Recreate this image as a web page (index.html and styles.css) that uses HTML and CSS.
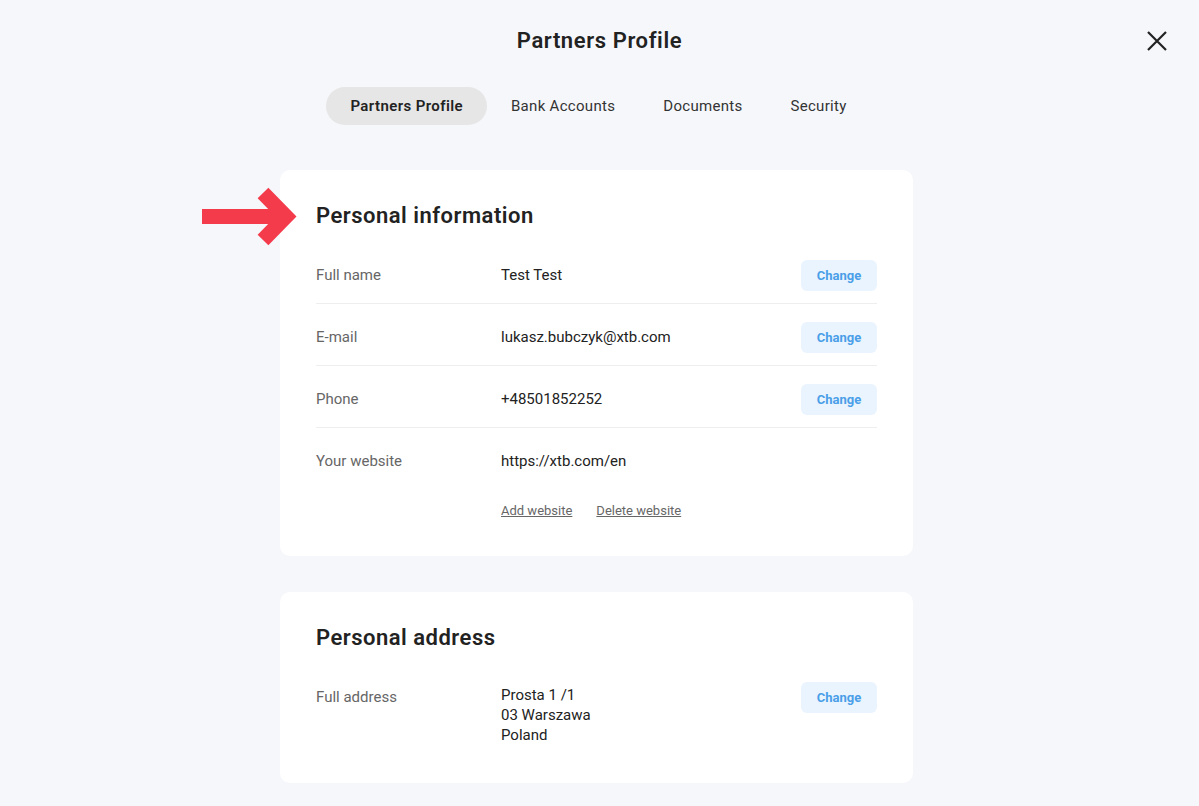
FILE: index.html
```html
<!DOCTYPE html>
<html lang="en">
<head>
<meta charset="utf-8">
<title>Partners Profile</title>
<link rel="stylesheet" href="styles.css">
</head>
<body>
<div class="page">
  <header class="header">
    <h1 class="title">Partners Profile</h1>
    <button class="close" aria-label="Close">
      <svg width="22" height="22" viewBox="0 0 22 22"><path d="M2 2 L20 20 M20 2 L2 20" stroke="#222" stroke-width="2.2" fill="none"/></svg>
    </button>
  </header>
  <nav class="tabs">
    <a class="tab active">Partners Profile</a>
    <a class="tab">Bank Accounts</a>
    <a class="tab">Documents</a>
    <a class="tab">Security</a>
  </nav>
  <main class="content">
    <section class="card card-info">
      <svg class="arrow" width="100" height="64" viewBox="0 0 100 64">
        <path d="M0 30.5 H84" stroke="#f43b4b" stroke-width="15" fill="none"/>
        <path d="M61 7 L84 30.5 L61 54" stroke="#f43b4b" stroke-width="15" fill="none" stroke-linejoin="miter"/>
      </svg>
      <h2 class="card-title">Personal information</h2>
      <div class="row">
        <div class="label">Full name</div>
        <div class="value">Test Test</div>
        <button class="change">Change</button>
      </div>
      <div class="row">
        <div class="label">E-mail</div>
        <div class="value">lukasz.bubczyk@xtb.com</div>
        <button class="change">Change</button>
      </div>
      <div class="row">
        <div class="label">Phone</div>
        <div class="value">+48501852252</div>
        <button class="change">Change</button>
      </div>
      <div class="row row-last row-web">
        <div class="label">Your website</div>
        <div class="value">
          <div>https://xtb.com/en</div>
          <div class="links"><a class="link">Add website</a><a class="link">Delete website</a></div>
        </div>
      </div>
    </section>
    <section class="card card-address">
      <h2 class="card-title">Personal address</h2>
      <div class="row row-last row-top">
        <div class="label">Full address</div>
        <div class="value multi">Prosta 1 /1<br>03 Warszawa<br>Poland</div>
        <button class="change">Change</button>
      </div>
    </section>
  </main>
</div>
</body>
</html>
```
FILE: styles.css
```css
* { box-sizing: border-box; }
html, body { margin: 0; padding: 0; }
body {
  background: #f6f7fb;
  font-family: Roboto, "Noto Sans", "Liberation Sans", sans-serif;
  color: #222;
  height: 806px;
  overflow: hidden;
}
.page { display: flex; flex-direction: column; align-items: center; }
.header {
  width: 100%;
  display: flex;
  justify-content: center;
  position: relative;
  padding-top: 27px;
}
.title {
  margin: 0;
  font-size: 22px;
  line-height: 28px;
  font-weight: 600;
  letter-spacing: 0.6px;
  color: #222;
}
.close {
  position: absolute;
  right: 31px;
  top: 30px;
  background: none;
  border: 0;
  padding: 0;
  width: 22px;
  height: 22px;
  cursor: pointer;
}
.tabs {
  display: flex;
  margin-top: 32px;
  margin-left: -2px;
}
.tab {
  height: 38px;
  line-height: 38px;
  padding: 0 24px;
  border-radius: 19px;
  font-size: 15px;
  color: #333;
  letter-spacing: 0.3px;
}
.tab.active {
  background: #e6e6e6;
  font-weight: 600;
  letter-spacing: 0.4px;
  color: #222;
}
.content {
  margin-top: 45px;
  margin-left: -6px;
  display: flex;
  flex-direction: column;
  gap: 36px;
}
.card {
  width: 633px;
  background: #fff;
  border-radius: 10px;
  padding: 32px 36px 35px;
  position: relative;
}
.card-address { padding-bottom: 38px; }
.arrow {
  position: absolute;
  left: -78px;
  top: 16px;
}
.card-title {
  margin: 0 0 12px;
  font-size: 22px;
  line-height: 28px;
  font-weight: 600;
  letter-spacing: 0.5px;
}
.row {
  display: flex;
  align-items: center;
  padding: 18px 0 12px;
  border-bottom: 1px solid #eeeeee;
  font-size: 15px;
}
.row-last { border-bottom: 0; padding-bottom: 0; }
.row-top, .row-web { align-items: flex-start; }
.label {
  width: 185px;
  flex: none;
  color: #666;
  line-height: 31px;
}
.value {
  flex: 1;
  line-height: 31px;
  color: #222;
}
.row-top .label { line-height: 20px; padding-top: 5px; }
.value.multi { line-height: 20px; padding-top: 3px; }
.links {
  display: flex;
  gap: 24px;
  margin-top: 24px;
  line-height: 20px;
}
.link {
  font-size: 13px;
  color: #666;
  text-decoration: underline;
  cursor: pointer;
}
.change {
  flex: none;
  width: 76px;
  height: 31px;
  border: 0;
  border-radius: 6px;
  background: #eaf4fe;
  color: #4a9fe8;
  font-family: inherit;
  font-weight: 700;
  font-size: 13px;
  cursor: pointer;
}
```
